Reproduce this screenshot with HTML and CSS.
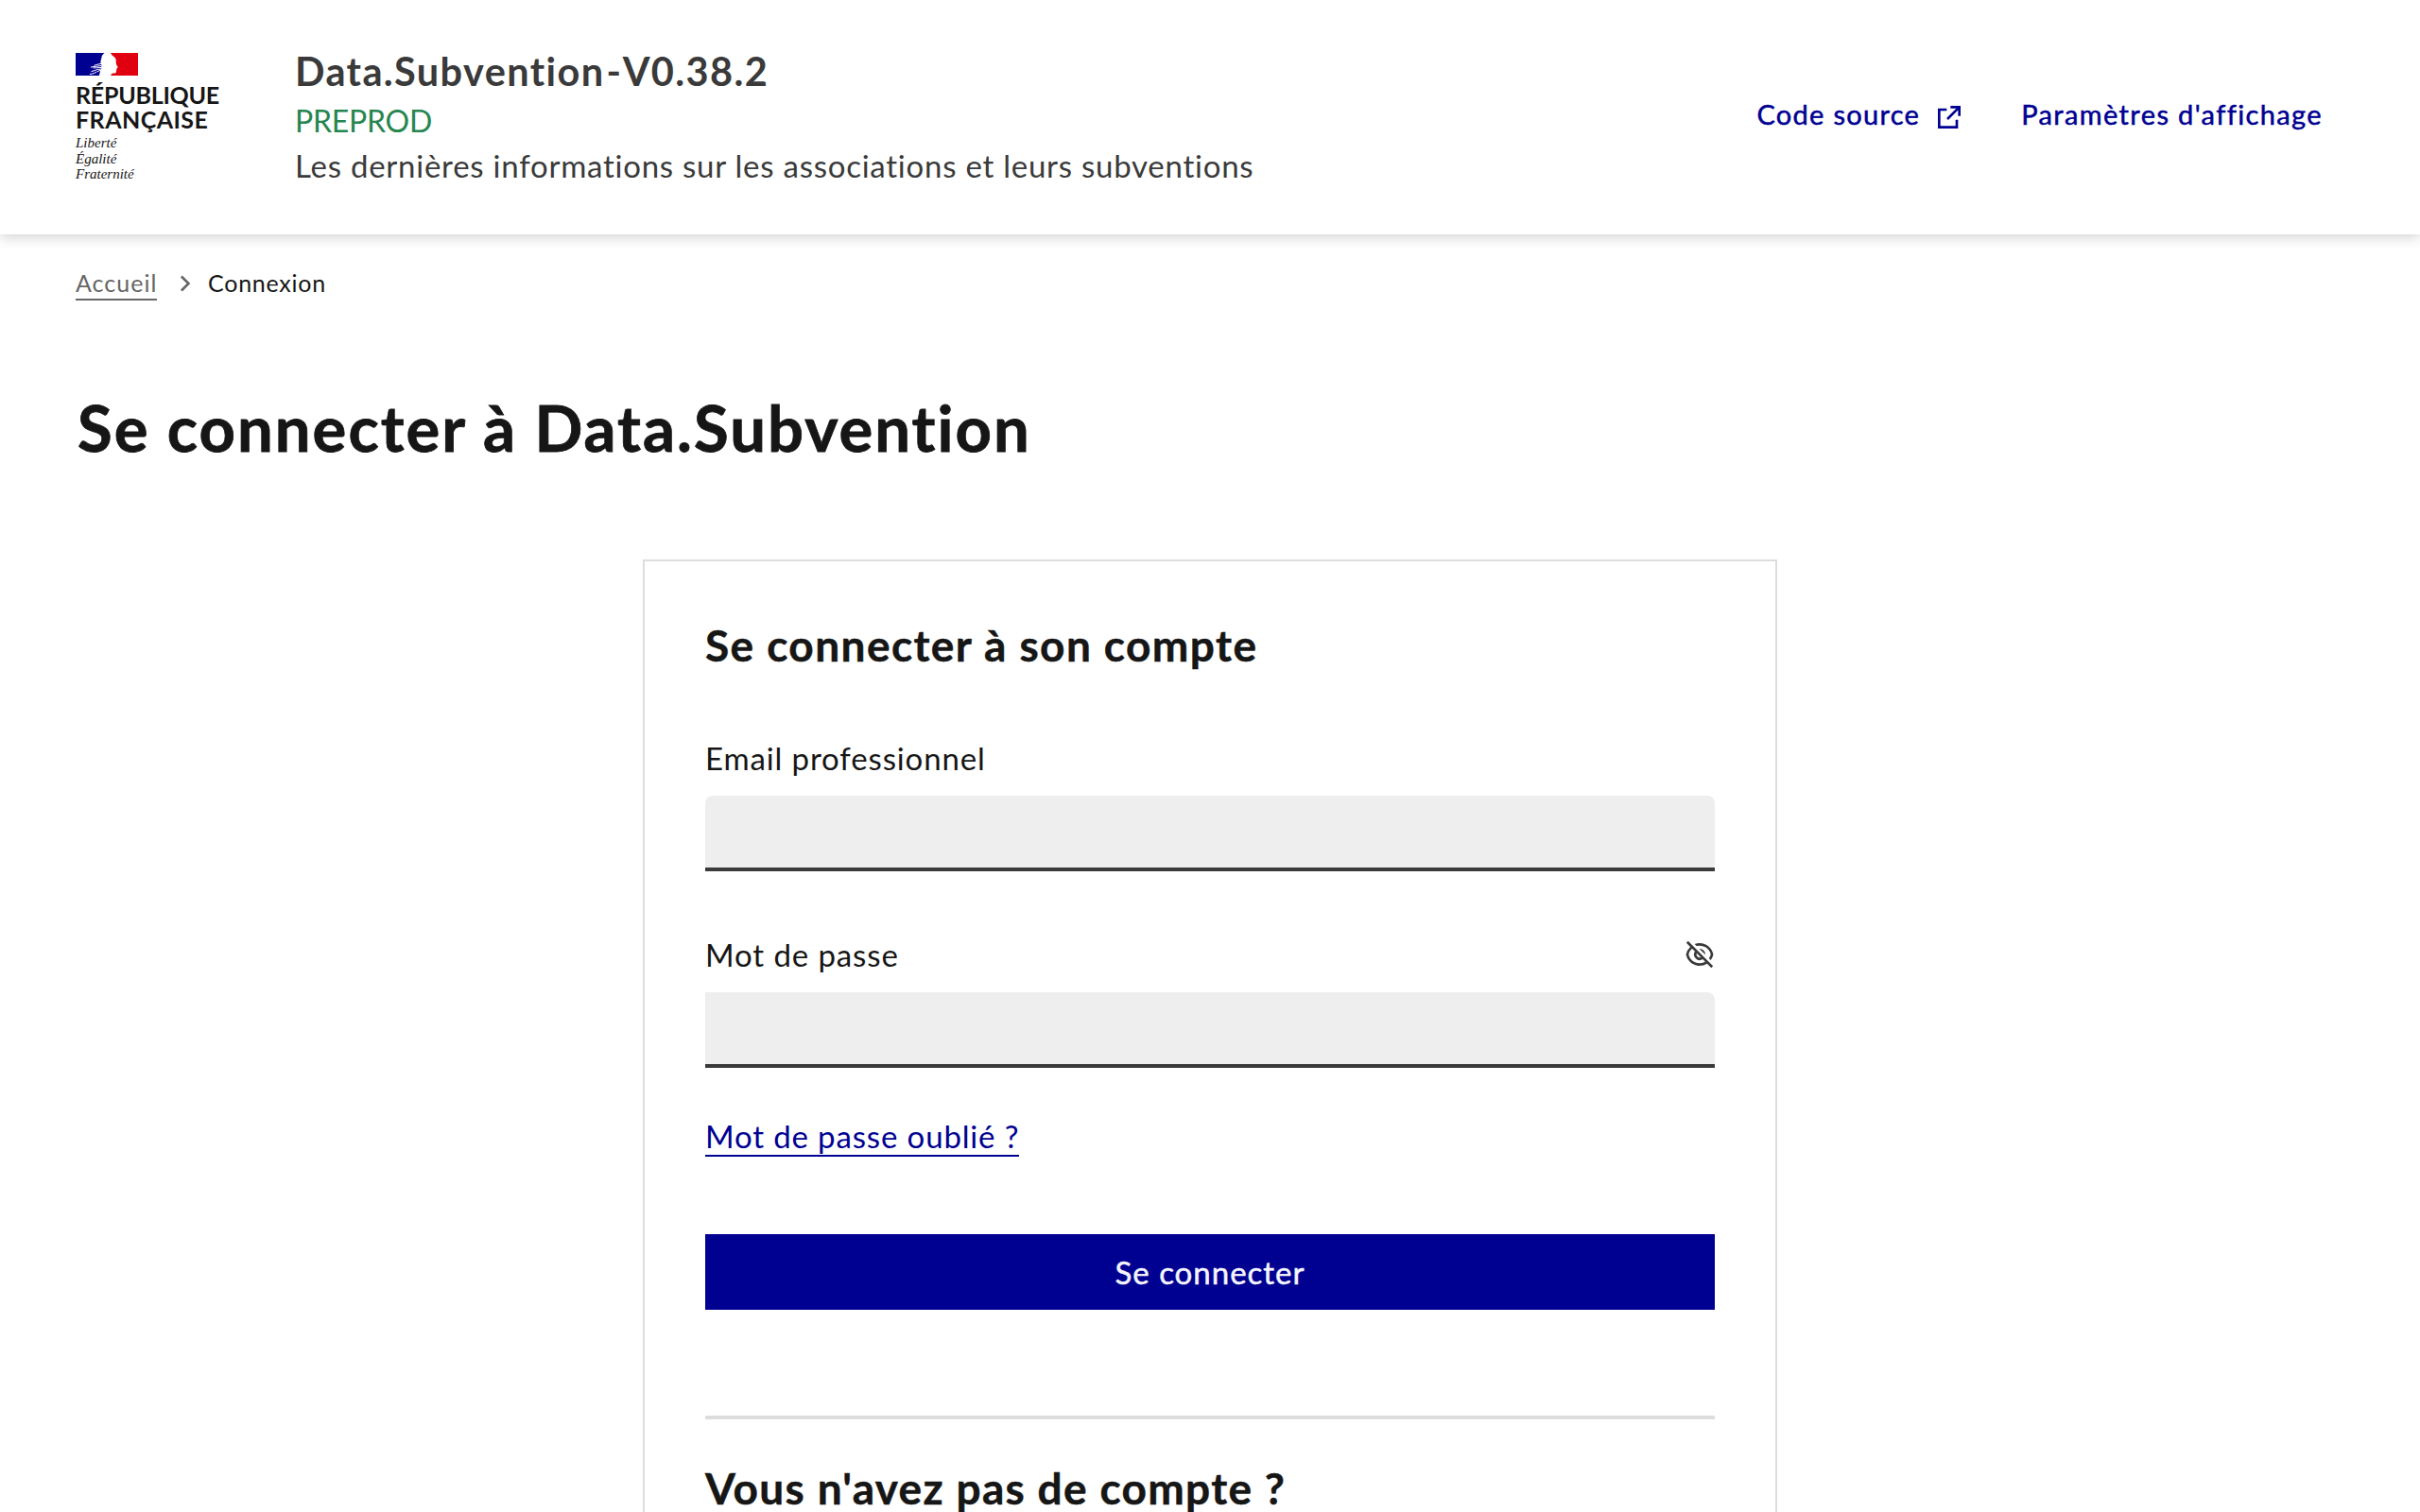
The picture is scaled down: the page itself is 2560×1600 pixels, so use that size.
FILE: index.html
```html
<!DOCTYPE html>
<html lang="fr">
<head>
<meta charset="utf-8">
<title>Connexion - Data.Subvention</title>
<link rel="stylesheet" href="styles.css">
</head>
<body>
<header class="header">
  <div class="brand">
    <svg class="brand-flag" viewBox="0 0 66 24" aria-hidden="true">
      <path fill="#000091" d="M0 0h30.500C28.500 1.500 27.500 3.200 27.400 5c-.1 1.700-1.200 3.200-1 4.800.2 1.700 1.400 2.600.8 4.200-.5 1.500.6 2.800-.6 4.200-1 1.200-.9 3.600-1.800 5.800H0z"/>
      <path fill="#e1000f" d="M37 0h29v24H37.300c.2-1.400.9-2.300 2.600-2.400 2.300-.1 3.200-.4 3-1.900-.1-.9.400-1.300.2-2 .6-.5.600-.9.300-1.500 1.300-.4 1.500-1 .9-2-.9-1.400-1.700-2.600-1.600-4.200.1-1.500.1-3.200-.7-4.500-.9-1.500-2.600-2.200-3.800-3.500z"/>
      <path fill="none" stroke="#fff" stroke-width="1" d="M27 11.500c-3 .3-5 1-7.500 1.800M27 13.500c-4 .2-7 1.400-11 1.600M18.500 15.800c3 .4 5-.6 9-.2M16.500 19.500c4-.3 5.500-2.600 10.500-2.400M15 22.500c4-.6 5.500-1.200 7.500-2.800M23 20c1.500-1.200 2.500-1.500 4-1.600"/>
    </svg>
    <p class="brand-name"><span class="brand-republic">RÉPUBLIQUE</span><span class="brand-french">FRANÇAISE</span></p>
    <p class="brand-motto"><span>Liberté</span><span>Égalité</span><span>Fraternité</span></p>
  </div>
  <div class="service">
    <p class="service-title">Data.Subvention - V0.38.2</p>
    <p class="service-env">PREPROD</p>
    <p class="service-tagline">Les dernières informations sur les associations et leurs subventions</p>
  </div>
  <nav class="tools">
    <a class="tool tool-source" href="#">Code source
      <svg class="icon" viewBox="0 0 24 24" aria-hidden="true"><path d="M10 5v2H5v12h12v-5h2v7H3V5h7zm11-2v8h-2V6.413l-7.793 7.794-1.414-1.414L17.585 5H13V3h8z"/></svg>
    </a>
    <a class="tool tool-settings" href="#">Paramètres d'affichage</a>
  </nav>
</header>
<main class="main">
  <nav class="breadcrumb">
    <a class="breadcrumb-link" href="#">Accueil</a>
    <svg class="icon" viewBox="0 0 24 24" aria-hidden="true"><path d="M13.172 12l-4.950-4.950 1.414-1.414L16 12l-6.364 6.364-1.414-1.414z"/></svg>
    <span class="breadcrumb-current">Connexion</span>
  </nav>
  <h1 class="page-title">Se connecter à Data.Subvention</h1>
  <section class="card">
    <h2 class="card-title card-title-login">Se connecter à son compte</h2>
    <form class="form">
      <label class="label label-email" for="email">Email professionnel</label>
      <input class="input" id="email" type="email">
      <div class="password-row">
        <label class="label label-password" for="password">Mot de passe</label>
        <svg class="icon" viewBox="0 0 24 24" aria-hidden="true"><path d="M17.882 19.297A10.949 10.949 0 0 1 12 21c-5.392 0-9.878-3.880-10.819-9a10.982 10.982 0 0 1 3.340-6.066L1.392 2.808l1.415-1.415 19.799 19.800-1.415 1.414-3.310-3.310zM5.935 7.350A8.965 8.965 0 0 0 3.223 12a9.005 9.005 0 0 0 13.201 5.838l-2.028-2.028A4.500 4.500 0 0 1 8.190 9.604L5.935 7.350zm6.979 6.978l-3.242-3.242a2.500 2.500 0 0 0 3.241 3.241zm7.893 2.264l-1.431-1.430A8.935 8.935 0 0 0 20.777 12 9.005 9.005 0 0 0 9.552 5.338L7.974 3.760C9.221 3.270 10.580 3 12 3c5.392 0 9.878 3.880 10.819 9a10.947 10.947 0 0 1-2.012 4.592zm-9.084-9.084a4.500 4.500 0 0 1 4.769 4.769l-4.770-4.769z"/></svg>
      </div>
      <input class="input input-password" id="password" type="password">
      <a class="forgot" href="#">Mot de passe oublié ?</a>
      <button class="submit" type="button">Se connecter</button>
    </form>
    <hr class="separator">
    <h2 class="card-title card-title-signup">Vous n'avez pas de compte ?</h2>
  </section>
</main>
</body>
</html>
```
FILE: styles.css
```css
* { box-sizing: border-box; margin: 0; padding: 0; }
html, body { height: 1600px; overflow: hidden; }
body {
  background: #fff;
  color: #161616;
  font-family: Lato, "Open Sans", sans-serif;
  font-size: 33px;
  line-height: 48px;
  white-space: nowrap;
}
.icon { width: 32px; height: 32px; fill: currentColor; flex: none; display: block; }

.header {
  display: flex;
  height: 248px;
  padding: 0 80px;
  box-shadow: 0 4px 12px rgba(0, 0, 18, .16);
}
.brand { width: 232px; padding-top: 56px; }
.brand-flag { display: block; width: 66px; height: 24px; }
.brand-name {
  display: flex;
  flex-direction: column;
  margin-top: 7px;
  font-size: 25px;
  line-height: 26px;
  font-weight: 700;
}
.brand-republic { letter-spacing: -.25px; }
.brand-french { letter-spacing: .45px; }
.brand-motto {
  display: flex;
  flex-direction: column;
  margin-top: 4px;
  font: italic 15px/16.5px "Liberation Serif", serif;
}
.service { padding-top: 47px; color: #3a3a3a; }
.service-title {
  font-size: 41.5px;
  line-height: 56px;
  font-weight: 700;
  letter-spacing: 1.38px;
  word-spacing: -9.5px;
}
.service-env { color: #27864f; font-size: 32px; letter-spacing: -.25px; padding-top: 1px; height: 48px; }
.service-tagline { letter-spacing: .75px; }

.tools { display: flex; margin-left: auto; padding-top: 97px; color: #000091; }
.tool {
  display: flex;
  color: inherit;
  font-size: 29px;
  text-decoration: none;
  -webkit-text-stroke: .5px currentColor;
}
.tool .icon { margin: 11px 0 0 15px; -webkit-text-stroke: 0; }
.tool-source { letter-spacing: 1.3px; }
.tool-settings { margin: 0 23px 0 60px; letter-spacing: 1.37px; }

.main { padding: 31px 80px 0; }
.breadcrumb { display: flex; font-size: 25px; line-height: 40px; }
.breadcrumb .icon { margin: 5px 8px 0 14px; color: #666; }
.breadcrumb-link {
  width: 86px;
  height: 39px;
  color: #666;
  letter-spacing: 1px;
  text-decoration: none;
  border-bottom: 2px solid #666;
}
.breadcrumb-current { letter-spacing: .75px; }
.page-title {
  margin-top: 93px;
  padding-left: 2px;
  font-size: 67px;
  line-height: 80px;
  letter-spacing: 2.02px;
  -webkit-text-stroke: .8px currentColor;
}

.card {
  width: 1200px;
  height: 1008px;
  margin: 100px auto 0;
  padding: 61px 64px 0;
  border: 2px solid #ddd;
  border-bottom: 0;
}
.card-title { font-size: 46px; line-height: 56px; -webkit-text-stroke: .5px currentColor; }
.card-title-login { letter-spacing: 1.42px; }
.card-title-signup { margin-top: 45px; letter-spacing: 1.32px; }
.form { display: flex; flex-direction: column; align-items: stretch; }
.label-email { margin-top: 67px; letter-spacing: .87px; }
.input {
  width: 100%;
  height: 80px;
  margin-top: 16px;
  border: 0;
  border-radius: 8px 8px 0 0;
  background: #eee;
  box-shadow: inset 0 -4px #3a3a3a;
}
.input-password { border-radius: 0 8px 0 0; }
.password-row { display: flex; justify-content: space-between; margin-top: 64px; color: #3a3a3a; }
.password-row .icon { margin-top: 8px; }
.label-password { color: #161616; letter-spacing: .89px; }
.forgot {
  align-self: flex-start;
  width: 332px;
  height: 46px;
  margin-top: 48px;
  color: #000091;
  letter-spacing: .85px;
  text-decoration: none;
  border-bottom: 2px solid;
}
.submit {
  height: 80px;
  margin-top: 82px;
  border: 0;
  background: #000091;
  color: #f5f5fe;
  font: inherit;
  line-height: 80px;
  letter-spacing: 1px;
  -webkit-text-stroke: .5px currentColor;
}
.separator { height: 4px; margin-top: 112px; border: 0; background: #ddd; }
```
